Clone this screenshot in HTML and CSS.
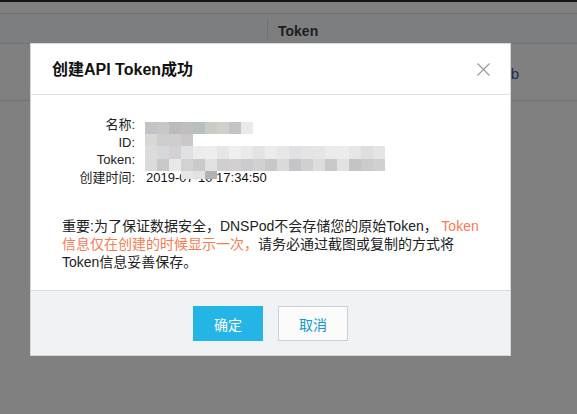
FILE: index.html
```html
<!DOCTYPE html>
<html lang="zh-CN">
<head>
<meta charset="utf-8">
<title>创建API Token成功</title>
<link rel="stylesheet" href="styles.css">
</head>
<body>
<div class="page">
  <div class="topbar"></div>
  <div class="gap"></div>
  <div class="thead">
    <div class="th th-first"></div>
    <div class="th th-token">Token</div>
  </div>
  <div class="trow">
    <div class="td"></div>
    <div class="td td-token">b</div>
  </div>
</div>

<div class="modal">
  <div class="modal-header">
    <h2 class="modal-title">创建API Token成功</h2>
    <svg class="close" width="13" height="13" viewBox="0 0 13 13">
      <path d="M0.5 0.5 L12.5 12.5 M12.5 0.5 L0.5 12.5" stroke="#9a9a9a" stroke-width="1.2" fill="none"/>
    </svg>
  </div>
  <div class="modal-body">
    <div class="info">
      <div class="label">名称:</div><div class="value"></div>
      <div class="label">ID:</div><div class="value"></div>
      <div class="label">Token:</div><div class="value"></div>
      <div class="label">创建时间:</div><div class="value">2019-07-10 17:34:50</div>
      <svg class="mosaic" width="250" height="70" viewBox="0 0 250 70">
        <g transform="translate(0,4)">
          <rect x="0" y="0" width="12" height="12" fill="#c3c3c5"/>
          <rect x="12" y="0" width="12" height="12" fill="#c9c6c9"/>
          <rect x="24" y="0" width="12" height="12" fill="#b9bcba"/>
          <rect x="36" y="0" width="12" height="12" fill="#c2bebe"/>
          <rect x="48" y="0" width="12" height="12" fill="#b6c0bc"/>
          <rect x="60" y="0" width="12" height="12" fill="#cbcbc7"/>
          <rect x="72" y="0" width="12" height="12" fill="#cfcfcb"/>
          <rect x="84" y="0" width="12" height="12" fill="#c5c3c6"/>
          <rect x="96" y="0" width="12" height="12" fill="#e9ebe9"/>

          <rect x="0" y="12" width="12" height="12" fill="#d8d9d7"/>
          <rect x="12" y="12" width="12" height="12" fill="#cdcdcb"/>
          <rect x="24" y="12" width="12" height="12" fill="#d0cdcf"/>
          <rect x="36" y="12" width="12" height="12" fill="#c9c7ca"/>

          <rect x="0" y="24" width="12" height="13" fill="#dcdcdc"/>
          <rect x="12" y="24" width="12" height="13" fill="#d7d8dc"/>
          <rect x="24" y="24" width="12" height="13" fill="#d3d1d1"/>
          <rect x="36" y="24" width="12" height="13" fill="#e0e1e4"/>
          <rect x="48" y="24" width="12" height="13" fill="#ececec"/>
          <rect x="60" y="24" width="12" height="13" fill="#eeeeee"/>
          <rect x="72" y="24" width="12" height="13" fill="#e6e6e8"/>
          <rect x="84" y="24" width="12" height="13" fill="#efefef"/>
          <rect x="96" y="24" width="12" height="13" fill="#eaeaea"/>
          <rect x="108" y="24" width="12" height="13" fill="#e3e3e3"/>
          <rect x="120" y="24" width="12" height="13" fill="#ececec"/>
          <rect x="132" y="24" width="12" height="13" fill="#e7e7e9"/>
          <rect x="144" y="24" width="12" height="13" fill="#e1e1e3"/>
          <rect x="156" y="24" width="12" height="13" fill="#e4e4e6"/>
          <rect x="168" y="24" width="12" height="13" fill="#e5e5e5"/>
          <rect x="180" y="24" width="12" height="13" fill="#ebebeb"/>
          <rect x="192" y="24" width="12" height="13" fill="#ececec"/>
          <rect x="204" y="24" width="12" height="13" fill="#e6e6e6"/>
          <rect x="216" y="24" width="12" height="13" fill="#dedede"/>
          <rect x="228" y="24" width="12" height="13" fill="#e4e4e4"/>

          <rect x="0" y="37" width="12" height="12" fill="#dbdbdb"/>
          <rect x="12" y="37" width="12" height="12" fill="#c8c8c8"/>
          <rect x="24" y="37" width="12" height="12" fill="#e8e8e8"/>
          <rect x="36" y="37" width="12" height="12" fill="#d2d2d2"/>
          <rect x="48" y="37" width="12" height="12" fill="#cacaca"/>
          <rect x="60" y="37" width="12" height="12" fill="#e2e2e4"/>
          <rect x="72" y="37" width="12" height="12" fill="#cfcfcf"/>
          <rect x="84" y="37" width="12" height="12" fill="#d2d0d0"/>
          <rect x="96" y="37" width="12" height="12" fill="#cbcbcf"/>
          <rect x="108" y="37" width="12" height="12" fill="#d1d1d1"/>
          <rect x="120" y="37" width="12" height="12" fill="#c9c7c7"/>
          <rect x="132" y="37" width="12" height="12" fill="#dadada"/>
          <rect x="144" y="37" width="12" height="12" fill="#c5c5c9"/>
          <rect x="156" y="37" width="12" height="12" fill="#d0cfd2"/>
          <rect x="168" y="37" width="12" height="12" fill="#dddddd"/>
          <rect x="180" y="37" width="12" height="12" fill="#c9c9c9"/>
          <rect x="192" y="37" width="12" height="12" fill="#e2e2e2"/>
          <rect x="204" y="37" width="12" height="12" fill="#c4c4c4"/>
          <rect x="216" y="37" width="12" height="12" fill="#cbcbcb"/>
          <rect x="228" y="37" width="12" height="12" fill="#d0d0d0"/>

          <rect x="36" y="49" width="12" height="8" fill="#e6e6e6"/>
          <rect x="48" y="49" width="12" height="8" fill="#e2e2e4"/>
          <rect x="60" y="49" width="12" height="8" fill="#aeb5b0"/>
        </g>
      </svg>
    </div>
    <p class="notice">重要:为了保证数据安全，DNSPod不会存储您的原始Token， <span class="warn">Token信息仅在创建的时候显示一次，</span>请务必通过截图或复制的方式将Token信息妥善保存。</p>
  </div>
  <div class="modal-footer">
    <button class="btn btn-primary">确定</button>
    <button class="btn btn-default">取消</button>
  </div>
</div>
</body>
</html>
```

FILE: styles.css
```css
* { box-sizing: border-box; }

html, body {
  margin: 0;
  padding: 0;
}

body {
  width: 577px;
  height: 414px;
  overflow: hidden;
  background: #808080;
  font-family: "Liberation Sans", "Noto Sans CJK SC", sans-serif;
  position: relative;
}

.topbar {
  height: 2px;
  background: #151515;
}

.gap {
  height: 12px;
  border-bottom: 1px solid #6f7073;
}

.thead {
  display: grid;
  grid-template-columns: 267px 1fr;
  height: 30px;
  background: #7d7e80;
  border-bottom: 1px solid #6f7073;
  align-items: center;
}

.th-token {
  border-left: 1px solid #6f7073;
  height: 20px;
  line-height: 20px;
  padding-left: 10px;
  padding-top: 2px;
  font-weight: bold;
  font-size: 14px;
  color: #1d1d1d;
}

.trow {
  display: grid;
  grid-template-columns: 267px 1fr;
  height: 57px;
  border-bottom: 1px solid #6f7073;
  align-items: center;
}

.td-token {
  text-align: right;
  padding-right: 58px;
  padding-top: 2px;
  font-size: 15px;
  color: #1a2f44;
}

.modal {
  position: absolute;
  left: 30px;
  top: 43px;
  width: 481px;
  border: 1px solid #d6d6d6;
  background: #fff;
}

.modal-header {
  height: 51px;
  border-bottom: 1px solid #dfe1e3;
  display: flex;
  align-items: center;
  justify-content: space-between;
  padding: 0 20px 0 21px;
}

.modal-title {
  margin: 0;
  font-size: 16px;
  font-weight: bold;
  color: #111;
  position: relative;
  top: -1px;
}

.close {
  display: block;
}

.modal-body {
  padding: 21px 30px 19px 31px;
}

.info {
  position: relative;
  display: grid;
  grid-template-columns: 73px 1fr;
  column-gap: 10px;
  font-size: 13px;
  line-height: 17.5px;
  color: #222;
}

.label {
  text-align: right;
}

.value {
  min-height: 17.5px;
  font-size: 13px;
  color: #111;
  padding-left: 1px;
}

.mosaic {
  position: absolute;
  left: 83px;
  top: 2px;
}

.notice {
  margin: 31px 0 0 0;
  font-size: 14px;
  line-height: 18px;
  color: #222;
}

.warn {
  color: #f97b54;
}

.modal-footer {
  background: #eff3f6;
  border-top: 1px solid #d8dcdf;
  padding: 15px 0 14px;
  display: flex;
  justify-content: center;
  gap: 15px;
}

.btn {
  width: 70px;
  height: 35px;
  font-family: "Liberation Sans", "Noto Sans CJK SC", sans-serif;
  font-size: 14px;
  cursor: pointer;
  padding: 0;
}

.btn-primary {
  background: #24b5e6;
  border: none;
  color: #fff;
}

.btn-default {
  background: #fbfbfb;
  border: 1px solid #cdd0d3;
  color: #1098cf;
}
```
